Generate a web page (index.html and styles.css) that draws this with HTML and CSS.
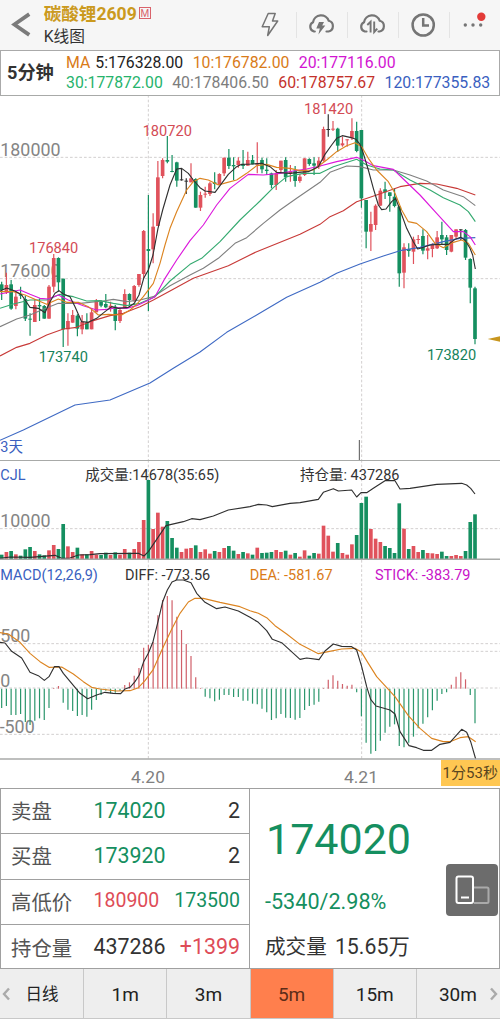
FILE: index.html
```
<!DOCTYPE html>
<html lang="zh-CN">
<head>
    <meta charset="UTF-8">
    <meta name="viewport" content="width=device-width, initial-scale=1.0">
    <title>碳酸锂2609 K线图</title>
    <link rel="stylesheet" href="styles.css">
</head>
<body>

    <header class="topbar">
        <svg class="back" viewBox="0 0 44 50"><path d="M29.5 14 L14.5 24.5 L29.5 35" /></svg>
        <div class="title">
            <div class="name">碳酸锂2609<span class="main-tag">M</span></div>
            <div class="sub">K线图</div>
        </div>
        <nav class="tools">
            <div class="tool">
                <svg viewBox="0 0 50 50"><path class="thin" d="M23.2 13.5 L30.2 13.5 L27.5 21 L32.7 21 L22.7 35.5 L24.3 26.8 L17.2 26.8 Z" /></svg>
            </div>
            <div class="tool">
                <svg viewBox="0 0 50 50">
                    <path class="cloud" d="M18.8 31.5 H18 A5 5 0 0 1 17 22.2 A8.2 8.2 0 0 1 32.8 20.8 A5.5 5.5 0 0 1 32.5 31.5 H30.5" />
                    <path class="fill" d="M23 22 L28 22 L26.2 25.4 L29.3 25.4 L22.4 34.4 L23.8 28.6 L20.3 28.6 Z" />
                </svg>
            </div>
            <div class="tool">
                <svg viewBox="0 0 50 50">
                    <path class="cloud" d="M19.5 31.5 H17.8 A5 5 0 0 1 17 22.2 A8.2 8.2 0 0 1 32.8 20.8 A5.5 5.5 0 0 1 32.5 31.5 H31.5" />
                    <path class="arrows" d="M20.3 25 L23.6 21.8 V32.5 M27.2 21.5 V32 L30.3 28.7" />
                </svg>
            </div>
            <div class="tool">
                <svg viewBox="0 0 50 50">
                    <circle class="clock" cx="25.2" cy="25" r="10.6" />
                    <path class="clock" d="M25.2 18 V25.5 H31" />
                </svg>
            </div>
            <div class="tool">
                <svg viewBox="0 0 50 50">
                    <circle class="fill" cx="16.3" cy="25" r="1.7" />
                    <circle class="fill" cx="24" cy="25" r="1.7" />
                    <circle class="fill" cx="31.7" cy="25" r="1.7" />
                    <circle class="dot" cx="32.3" cy="16.7" r="4.2" />
                </svg>
            </div>
        </nav>
    </header>

    <section class="ma-bar">
        <div class="period">5分钟</div>
        <div class="ma-list">
            <div class="ma-row first">
                <span class="orange">MA</span>
                <span class="black">5:176328.00</span>
                <span class="orange">10:176782.00</span>
                <span class="magenta">20:177116.00</span>
            </div>
            <div class="ma-row">
                <span class="lime">30:177872.00</span>
                <span class="gray">40:178406.50</span>
                <span class="red">60:178757.67</span>
                <span class="blue">120:177355.83</span>
            </div>
        </div>
    </section>

    <!-- charts: 3 units per pixel -->
    <svg class="chart" id="kline" viewBox="0 0 1500 1095" width="500" height="365">
        <path class="grid" d="M0 187 H1500 M0 551 H1500 M445 0 V1095 M1085 0 V1095" />
        <text class="axis" x="1" y="182">180000</text>
        <text class="axis" x="1" y="545">176000</text>
        <g id="candles"></g>
        <g id="averages"></g>
        <path class="mark" d="M1078 1035 V1095" />
        <path class="arrow" d="M1463 732 L1500 724 V740 Z" />
        <text class="high" x="87" y="475">176840</text>
        <text class="high" x="428" y="122">180720</text>
        <text class="high" x="912" y="57">181420</text>
        <text class="low" x="116" y="801">173740</text>
        <text class="low" x="1281" y="794">173820</text>
        <text class="label blue" x="1" y="1071">3天</text>
        <path class="edge" d="M0 1 H1500" />
    </svg>

    <svg class="chart" id="volume" viewBox="0 0 1500 300" width="500" height="100">
        <path class="grid" d="M0 206 H1500 M445 0 V300 M1085 0 V300" />
        <text class="axis" x="1" y="200">10000</text>
        <g id="vol-bars"></g>
        <g id="interest"></g>
        <text class="label blue" x="1" y="61">CJL</text>
        <text class="label" x="256" y="61">成交量:14678(35:65)</text>
        <text class="label" x="900" y="61">持仓量: 437286</text>
        <path class="edge" d="M0 1 H1500 M0 298 H1500" />
    </svg>

    <svg class="chart" id="macd" viewBox="0 0 1500 600" width="500" height="200">
        <path class="grid" d="M0 251 H1500 M0 274 H1500 M0 384 H1500 M0 523 H1500 M445 0 V597 M1085 0 V597" />
        <text class="axis" x="1" y="247">500</text>
        <text class="axis" x="1" y="382">0</text>
        <text class="axis" x="-1" y="518">-500</text>
        <g id="sticks"></g>
        <g id="macd-lines"></g>
        <text class="label blue" x="1" y="59">MACD(12,26,9)</text>
        <text class="label" x="375" y="59">DIFF: -773.56</text>
        <text class="label orange" x="749" y="59">DEA: -581.67</text>
        <text class="label magenta" x="1125" y="59">STICK: -383.79</text>
        <path class="edge" d="M0 597 H1500" />
    </svg>

    <div class="dates">
        <span>4.20</span>
        <span>4.21</span>
        <div class="countdown">1分53秒</div>
    </div>

    <section class="quote">
        <div class="book">
            <div class="row"><b>卖盘</b><i class="green">174020</i><em>2</em></div>
            <div class="row"><b>买盘</b><i class="green">173920</i><em>2</em></div>
            <div class="row small"><b>高低价</b><i class="rose">180900</i><em class="green">173500</em></div>
            <div class="row"><b>持仓量</b><i>437286</i><em class="rose">+1399</em></div>
        </div>
        <div class="last">
            <div class="price">174020</div>
            <div class="change">-5340/2.98%</div>
            <div class="amount">成交量 <span>15.65万</span></div>
            <div class="rotate">
                <svg viewBox="0 0 52 52">
                    <path class="dim" d="M28 23.5 H41 Q42.5 23.5 42.5 25 V37.5 Q42.5 39 41 39 H28" />
                    <rect x="10.5" y="12.5" width="16.5" height="26.5" rx="2" />
                    <path d="M15 33.5 H23" />
                </svg>
            </div>
        </div>
    </section>

    <nav class="tabs">
        <div class="tab"><svg class="prev" viewBox="0 0 8 14"><path d="M7 1.5 L2 7 L7 12.5" /></svg>日线</div>
        <div class="tab">1m</div>
        <div class="tab">3m</div>
        <div class="tab active">5m</div>
        <div class="tab">15m</div>
        <div class="tab">30m<svg class="next" viewBox="0 0 8 14"><path d="M1 1.5 L6 7 L1 12.5" /></svg></div>
    </nav>

    <script src="chart.js"></script>
</body>
</html>
```
FILE: styles.css
```
*{
    box-sizing: border-box;
}

body{
    margin: 0;
    width: 500px;
    height: 1019px;
    overflow: hidden;
    background-color: white;
    color: #333;
    font-family: Roboto, "Noto Sans CJK SC", sans-serif;
}

svg{
    display: block;
}

.orange{ color: #d97b18; fill: #d97b18; }
.black{ color: #222; }
.magenta{ color: #d214d2; fill: #d214d2; }
.lime{ color: #26b36c; }
.gray{ color: #7d7d7d; }
.red{ color: #c4322c; }
.blue{ color: #3a5fc0; fill: #3a5fc0; }
.green{ color: #158f60; }
.rose{ color: #de4c57; }

/* top bar */
.topbar{
    height: 50px;
    display: flex;
    background-color: #f6f6f6;
}

.back{
    width: 44px;
    height: 50px;
    fill: none;
    stroke: #7b7b7b;
    stroke-width: 3.8;
}

.title{
    width: 203px;
}

.name{
    display: flex;
    align-items: center;
    height: 25px;
    font-size: 17.6px;
    font-weight: bold;
    color: #cb9a1e;
}

.main-tag{
    width: 12px;
    height: 12px;
    margin-left: 2px;
    border: 1px solid #d9636b;
    color: #d9636b;
    font-size: 10px;
    line-height: 11px;
    font-weight: normal;
    text-align: center;
}

.sub{
    font-size: 15.7px;
    line-height: 24px;
}

.tools{
    display: flex;
}

.tool{
    width: 51px;
    height: 50px;
    position: relative;
}

.tool + .tool::before{
    content: "";
    position: absolute;
    left: 0;
    top: 12px;
    width: 1px;
    height: 26px;
    background-color: #e4e4e4;
}

.tool svg{
    width: 50px;
    height: 50px;
    fill: none;
    stroke: #757575;
}

.thin{ stroke-width: 1.5; stroke-linejoin: round; }
.cloud{ stroke-width: 2.2; stroke-linecap: round; }
.arrows{ stroke-width: 1.9; }
.clock{ stroke-width: 2.5; }
.tool .fill{ fill: #757575; stroke: none; }
.tool .dot{ fill: #e33b38; stroke: none; }

/* moving averages */
.ma-bar{
    height: 45px;
    display: flex;
    border: 1px solid #aaa;
    border-bottom: none;
}

.period{
    width: 65px;
    padding-left: 6px;
    font-size: 18.2px;
    font-weight: bold;
    line-height: 43px;
}

.ma-list{
    padding-top: 2px;
    font-size: 15.8px;
}

.ma-row{
    display: flex;
    height: 19.5px;
    line-height: 20px;
    gap: 9.4px;
    white-space: nowrap;
}

.ma-row .orange:first-child{
    margin-right: -4.3px;
}

/* charts */
.chart{
    font-family: Roboto, "Noto Sans CJK SC", sans-serif;
    fill: none;
    stroke-width: 3;
    overflow: hidden;
}

.grid{
    stroke: #d2cfcf;
    stroke-dasharray: 8 6;
}

.edge{
    stroke: #a8aaa8;
    stroke-width: 4.5;
}

.axis{ font-size: 53.5px; fill: #858585; }
.high{ font-size: 43.8px; fill: #d34b55; }
.low{ font-size: 43.8px; fill: #17825a; }
.label{ font-size: 43.5px; fill: #333; }
.label.blue{ fill: #3a5fc0; }
.label.orange{ fill: #d97b18; }
.label.magenta{ fill: #c812c8; }
.mark{ stroke: #555; }
.arrow{ fill: #c8961e; }

/* date axis */
.dates{
    height: 28px;
    display: flex;
    align-items: flex-start;
    font-size: 17.4px;
    line-height: 34px;
    color: #808080;
}

.dates span{
    width: 213px;
    padding-left: 131px;
}

.dates span + span{
    width: 227.5px;
}

.countdown{
    width: 59.5px;
    height: 26px;
    background-color: #ffc752;
    color: #5a4520;
    font-size: 15px;
    line-height: 26px;
    text-align: center;
    white-space: nowrap;
}

/* quote */
.quote{
    height: 181px;
    display: flex;
    border: 1px solid #a0a0a0;
}

.book{
    width: 249px;
    border-right: 1px solid #a0a0a0;
}

.row{
    height: 45.3px;
    display: flex;
    align-items: center;
    padding: 0 9px 2px 10px;
    font-size: 21.4px;
    border-bottom: 1px solid #a0a0a0;
}

.row:last-child{
    border-bottom: none;
    height: 44px;
    padding-bottom: 0;
}

.row b{
    width: 82.5px;
    font-size: 20.4px;
    font-weight: normal;
    color: #555;
}

.row i{
    font-style: normal;
}

.row em{
    margin-left: auto;
    font-style: normal;
}

.small{
    font-size: 19.5px;
}

.last{
    flex: 1;
    padding: 24px 0 0 15px;
    position: relative;
}

.price{
    padding-left: 1px;
    font-size: 43px;
    line-height: 52px;
    color: #158f60;
}

.change{
    margin-top: 22px;
    font-size: 21.6px;
    line-height: 30px;
    color: #158f60;
}

.amount{
    margin-top: 14px;
    font-size: 20.6px;
    line-height: 32px;
}

.amount span{
    margin-left: 3px;
    font-size: 21.3px;
}

.rotate{
    position: absolute;
    right: 1px;
    top: 75px;
    width: 52px;
    height: 52px;
    border-radius: 4px;
    background-color: #6c6c6c;
    fill: none;
    stroke: white;
    stroke-width: 2;
}

.dim{
    stroke: #aaa;
}

/* period tabs */
.tabs{
    height: 50px;
    display: flex;
    background-color: #eee;
    border-bottom: 1px solid #c8c8c8;
}

.tab{
    flex: 1;
    position: relative;
    text-align: center;
    font-size: 19px;
    line-height: 51px;
    color: #222;
    border-right: 1px solid #c8c8c8;
}

.tab:first-child{
    font-size: 16.5px;
    padding-left: 1px;
}

.tab:last-child{
    border-right: none;
    padding-right: 1px;
}

.active{
    background-color: #ff7f4d;
    color: #5c2c18;
}

.tab svg{
    position: absolute;
    top: 18px;
    width: 8px;
    height: 14px;
    fill: none;
    stroke: #aaa;
    stroke-width: 2.4;
}

.prev{ left: 2px; }
.next{ right: 2px; }
```
FILE: chart.js
```
const UP = "#e0525c";
const DOWN = "#158f60";
const FLAT = "#333";
const colors = { r: UP, g: DOWN, k: FLAT };

// color, high, body top, body bottom, low
const candles = [
    "g 560 568 585 615", "r 533 570 592 597", "g 555 568 641 644", "r 590 605 633 643", "g 575 598 602 612",
    "g 603 612 671 678", "g 655 671 674 722", "r 612 630 681 681", "g 610 630 634 678", "g 630 633 671 671",
    "r 570 575 671 671", "r 477 489 575 592", "g 487 489 562 590", "g 551 551 703 756", "r 655 678 703 752",
    "r 645 660 683 683", "g 658 662 701 724", "r 660 680 703 718", "g 655 683 703 703", "r 640 652 703 703",
    "r 612 617 652 652", "g 616 619 632 637", "g 597 627 637 640", "r 620 632 640 650", "g 630 635 678 706",
    "r 640 645 678 684", "r 583 597 640 640", "g 595 597 615 630", "r 570 573 617 622", "r 537 537 570 575",
    "r 405 408 537 550", "g 300 462 468 648", "r 355 395 463 505", "r 198 247 393 393", "r 190 195 243 250",
    "g 123 195 200 205", "g 180 228 231 232", "g 200 202 257 275", "k 222 253 256 257", "k 250 257 260 297",
    "r 205 250 262 262", "g 250 252 338 338", "r 290 300 338 348", "r 275 296 299 308", "r 260 265 297 303",
    "g 232 262 267 283", "r 235 237 270 270", "r 188 188 235 243", "g 162 188 213 222", "g 187 210 214 255",
    "r 187 197 210 218", "g 165 208 213 222", "r 170 195 212 212", "g 180 195 208 208", "r 142 205 209 235",
    "g 188 195 223 235", "g 190 224 228 240", "g 233 235 270 280", "r 225 235 270 285", "r 197 197 225 232",
    "g 187 195 247 260", "r 210 230 237 260", "g 213 227 258 275", "r 237 245 258 263", "r 190 190 240 243",
    "g 190 192 207 212", "g 187 205 212 240", "r 187 197 215 222", "r 95 102 197 200", "k 58 102 105 125",
    "r 78 101 104 108", "g 98 101 152 170", "r 125 145 151 155", "r 133 133 136 155", "r 70 108 130 135",
    "g 80 108 168 172", "g 105 105 310 338", "g 315 315 410 460", "r 350 387 410 468", "r 328 332 390 405",
    "r 280 287 332 332", "g 260 283 292 312", "g 292 292 303 350", "g 280 305 333 337", "g 333 335 535 575",
    "r 445 457 533 580", "g 445 462 468 485", "r 425 433 470 507", "r 420 432 435 447", "g 403 423 467 478",
    "r 420 460 467 493", "r 445 450 462 487", "r 408 427 460 462", "g 380 420 433 448", "g 420 427 465 480",
    "r 420 420 470 472", "r 403 403 425 430", "k 403 403 406 435", "g 402 405 488 495", "g 490 492 578 625",
    "g 575 580 732 748"
].map((row) => row.split(" "));

const averages = [
    ["#3f6ac4", "0,1036 70,1005 225,930 330,915 450,864 520,820 600,771 680,712 770,660 860,607 960,562 1010,535 1080,507 1150,483 1200,467 1260,457 1330,440 1380,430 1426,428"],
    ["#c83a38", "0,783 50,757 90,745 140,720 190,702 230,697 270,680 330,662 370,655 420,635 460,615 510,588 580,550 685,512 770,470 900,418 960,388 990,365 1030,347 1070,320 1130,300 1200,275 1260,265 1310,267 1370,280 1426,300"],
    ["#808080", "0,695 50,672 90,660 130,643 175,625 240,625 310,618 340,613 380,620 420,615 460,605 510,572 570,540 610,520 655,490 705,445 740,428 790,385 840,345 890,310 960,262 990,232 1040,213 1080,215 1120,225 1180,225 1230,240 1280,258 1330,285 1390,305 1426,332"],
    ["#35aa70", "0,640 40,627 90,615 140,615 180,598 220,605 260,618 300,617 340,625 380,632 420,625 465,605 510,558 570,508 605,490 660,440 720,375 780,318 820,278 860,245 910,235 960,235 1000,215 1070,193 1100,210 1140,222 1180,225 1230,255 1290,285 1330,308 1380,330 1405,350 1426,380"],
    ["#dc18dc", "0,597 60,585 90,598 120,610 145,612 175,600 205,615 250,632 290,645 320,643 350,638 380,640 410,632 440,618 465,605 495,550 530,495 570,437 610,390 650,330 690,280 745,238 790,240 840,235 880,228 920,222 960,213 1010,200 1070,187 1095,198 1120,212 1180,223 1210,252 1260,300 1310,355 1360,410 1390,410 1410,425 1426,450"],
    ["#dc8420", "0,590 40,590 75,600 110,615 140,628 175,612 200,622 235,622 265,635 295,660 325,658 365,660 390,645 410,628 430,605 460,565 480,505 495,450 510,400 530,350 560,285 580,260 600,250 625,255 655,270 680,263 710,255 740,235 770,212 800,208 830,217 870,220 900,227 940,225 980,195 1010,170 1040,152 1065,143 1085,155 1105,190 1130,225 1165,260 1185,295 1205,345 1225,380 1250,385 1280,410 1305,445 1330,458 1360,442 1385,435 1405,445 1426,480"],
    ["#303030", "0,588 20,579 45,588 65,600 90,637 115,640 135,653 150,620 165,595 177,587 190,597 210,605 225,635 245,680 265,682 290,670 315,650 335,635 355,640 385,637 403,625 417,600 431,550 445,525 459,480 474,400 488,345 510,270 530,222 545,220 565,235 580,255 600,278 615,288 645,292 665,265 685,238 710,215 725,208 755,207 785,205 810,215 830,232 870,235 895,232 925,230 955,215 975,178 995,150 1010,130 1027,122 1050,127 1068,133 1080,148 1090,175 1105,225 1120,280 1135,330 1145,344 1158,342 1175,320 1187,310 1200,345 1220,400 1240,440 1253,462 1270,457 1290,450 1315,448 1345,448 1365,433 1382,427 1395,435 1410,460 1418,480 1426,522"]
];

const volumes = [
    284, 276, 273, 283, 287, 268, 261, 273, 283, 286, 271, 255, 267, 192, 259, 276, 263, 283, 283, 273,
    284, 285, 278, 285, 277, 284, 267, 278, 267, 246, 180, 60, 207, 158, 200, 183, 234, 263, 276, 266,
    264, 256, 276, 268, 281, 273, 276, 264, 258, 272, 282, 276, 280, 284, 263, 279, 278, 276, 270, 276,
    272, 284, 279, 290, 271, 287, 279, 281, 197, 227, 275, 249, 279, 284, 253, 225, 129, 110, 207, 236,
    246, 258, 264, 279, 130, 206, 267, 258, 276, 270, 279, 280, 282, 275, 288, 288, 285, 288, 273, 186, 163
];

const interest = "0,295 30,291 90,292 165,286 185,295 210,294 235,285 270,284 300,281 415,280 432,288 445,275 470,238 498,197 550,185 575,176 600,179 640,168 685,150 750,140 775,133 800,135 817,140 870,130 900,128 955,118 970,97 1000,86 1015,93 1055,90 1070,111 1083,98 1100,98 1120,85 1155,62 1185,62 1200,87 1230,85 1310,73 1385,70 1400,75 1412,85 1425,102";

const sticks = [
    444, 438, 465, 465, 462, 486, 495, 482, 475, 480, 444, 384, 378, 428, 449, 453, 468, 465, 470, 449,
    420, 405, 392, 400, 398, 392, 375, 367, 347, 324, 263, 255, 245, 166, 120, 108, 121, 170, 210, 252,
    288, 352, 384, 410, 415, 424, 419, 405, 405, 411, 411, 422, 422, 431, 433, 446, 457, 480, 475, 462,
    473, 474, 479, 474, 450, 438, 434, 425, 384, 359, 346, 362, 372, 377, 374, 397, 469, 548, 581, 573,
    542, 518, 500, 493, 558, 562, 548, 530, 505, 491, 472, 451, 422, 402, 397, 374, 350, 337, 358, 405, 490
];

const macdLines = [
    ["#dc8420", "0,218 25,222 60,247 90,280 120,305 147,322 185,321 220,342 250,365 275,382 300,387 350,393 390,392 415,383 435,362 460,328 490,260 515,208 540,160 565,126 585,115 610,115 660,127 720,140 750,152 775,160 800,173 825,197 860,222 900,253 955,281 985,275 1025,267 1065,265 1085,277 1105,310 1130,350 1185,410 1225,467 1260,505 1295,535 1330,545 1350,545 1380,533 1405,530 1427,545"],
    ["#303030", "0,247 15,249 35,274 65,294 90,337 115,347 133,361 147,350 163,320 177,320 190,340 215,370 240,400 263,416 290,405 315,397 340,400 362,401 375,387 390,382 405,365 418,345 431,305 445,280 459,245 474,185 488,125 502,90 516,66 530,60 550,60 573,68 590,100 615,127 650,146 675,141 715,153 750,172 775,187 800,212 817,238 845,248 900,298 920,294 957,299 975,273 1000,252 1025,259 1055,260 1070,270 1085,320 1100,380 1112,418 1128,438 1170,450 1185,462 1200,515 1227,557 1250,563 1270,571 1295,571 1320,553 1350,547 1385,508 1400,517 1412,545 1427,597"]
];

function xOf(i) {
    return 5 + i * 14.2;
}

function add(id, tag, attrs) {
    const el = document.createElementNS("http://www.w3.org/2000/svg", tag);
    for (const key in attrs) {
        el.setAttribute(key, attrs[key]);
    }
    document.getElementById(id).appendChild(el);
}

function addLine(id, color, points) {
    add(id, "polyline", { points: points, stroke: color, "stroke-width": 3.4, "stroke-linejoin": "round" });
}

candles.forEach(([c, high, top, bottom, low], i) => {
    const x = xOf(i);
    add("candles", "path", { d: `M${x} ${high} V${low}`, stroke: colors[c], "stroke-width": 3.6 });
    add("candles", "rect", { x: x - 5.5, y: top, width: 11, height: bottom - top, fill: colors[c] });
});

averages.forEach(([color, points]) => addLine("averages", color, points));

volumes.forEach((y, i) => {
    const color = candles[i][0] === "g" ? DOWN : UP;
    add("vol-bars", "rect", { x: xOf(i) - 5.5, y: y, width: 11, height: 298 - y, fill: color });
});

addLine("interest", "#303030", interest);

sticks.forEach((y, i) => {
    const color = y > 386 ? "#2b966c" : "#d0606a";
    add("sticks", "path", { d: `M${xOf(i)} 386 V${y}`, stroke: color, "stroke-width": 3.6 });
});

macdLines.forEach(([color, points]) => addLine("macd-lines", color, points));
```
